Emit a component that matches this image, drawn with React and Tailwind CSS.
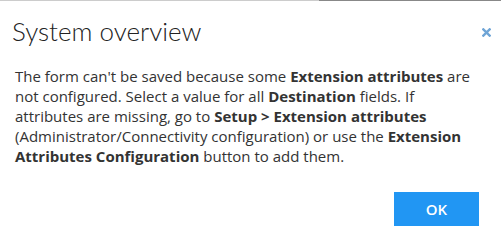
export default function App() {
  return (
    <div className="w-[501px] h-[243px] bg-white relative overflow-hidden" style={{ fontFamily: '"Open Sans", sans-serif' }}>
      <div className="flex h-px">
        <div className="w-[319px] bg-[#cccccc]" />
        <div className="flex-1 bg-[#888888]" />
      </div>

      <div className="flex items-center justify-between pl-[12px] pr-[10px] pt-[14px]">
        <h1 className="text-[26px] leading-[32px] font-light text-[#222]" style={{ fontFamily: 'Lato, "Open Sans", sans-serif' }}>
          System overview
        </h1>
        <button className="w-[9px] h-[9px] mt-[2px]">
          <svg viewBox="0 0 10 10" className="w-[9px] h-[9px]">
            <path d="M1.5 1.5 L8.5 8.5 M8.5 1.5 L1.5 8.5" stroke="#6fa5d6" strokeWidth="2.6" strokeLinecap="square" />
          </svg>
        </button>
      </div>

      <p className="pl-[15px] w-[482px] mt-[19px] text-[15px] leading-[20px] text-[#333]">
        The form can't be saved because some <b>Extension attributes</b> are not configured. Select a value for all <b>Destination</b> fields. If attributes are missing, go to <b>Setup &gt; Extension attributes</b> (Administrator/Connectivity configuration) or use the <b>Extension Attributes Configuration</b> button to add them.
      </p>

      <div className="flex justify-end pr-[22px] mt-[26px]">
        <button className="w-[85px] h-[34px] bg-[#2196f3] text-white text-[15px] font-semibold">OK</button>
      </div>
    </div>
  )
}
